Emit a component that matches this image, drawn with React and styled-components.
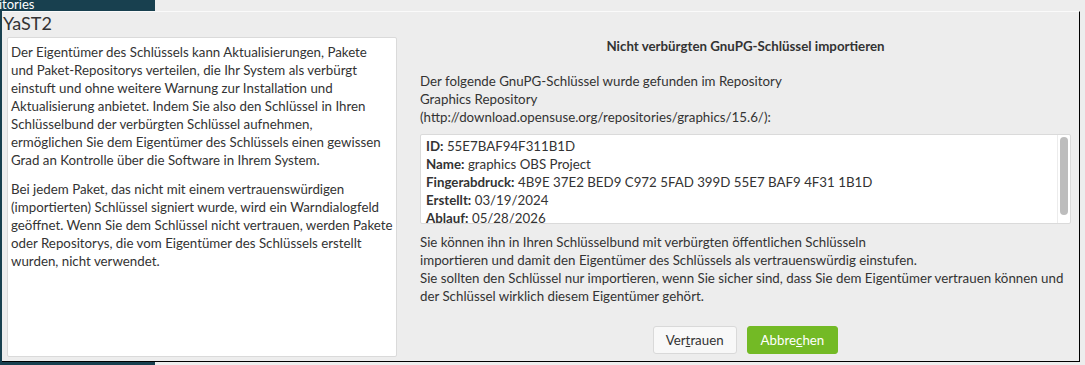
import React from "react";
import styled, { createGlobalStyle } from "styled-components";

const Global = createGlobalStyle`
  html, body { margin: 0; padding: 0; background: #ededed; }
  body { font-family: Lato, "Noto Sans", sans-serif; }
  * { box-sizing: border-box; }
`;

const Desktop = styled.div`
  position: relative;
  width: 1085px;
  height: 365px;
  background: #ededed;
  overflow: hidden;
`;

const BackWindow = styled.div`
  position: absolute;
  left: 0;
  top: 0;
  width: 155px;
  height: 365px;
  background: #18404f;
`;

const BackLabel = styled.div`
  color: #ffffff;
  font-size: 13px;
  line-height: 10px;
  margin-left: -1px;
  margin-top: -1px;
  white-space: nowrap;
`;

const Window = styled.div`
  position: absolute;
  left: 2px;
  top: 11px;
  width: 1078px;
  height: 351px;
  background: #ededed;
  border-top: 1px solid #fafafa;
  border-right: 1px solid #000;
  border-bottom: 1px solid #000;
  display: flex;
  flex-direction: column;
  color: #333;
`;

const TitleBar = styled.div`
  height: 25px;
  padding-left: 1px;
  font-size: 18px;
  line-height: 22px;
  color: #333;
`;

const Body = styled.div`
  flex: 1;
  display: flex;
  padding: 0 4px 4px 5px;
  min-height: 0;
`;

const LeftPanel = styled.div`
  width: 390px;
  background: #fff;
  border: 1px solid #dadada;
  border-radius: 2px;
  padding: 5px 3px;
  font-size: 13.3px;
  line-height: 18px;
`;

const Para = styled.p`
  margin: 0 0 ${(p) => p.$gap || 0}px 0;
  white-space: nowrap;
`;

const RightPanel = styled.div`
  flex: 1;
  display: flex;
  flex-direction: column;
  padding: 0 4px 0 23px;
  font-size: 13.3px;
  line-height: 18px;
`;

const Heading = styled.div`
  font-weight: 700;
  text-align: center;
`;

const Text = styled.div`
  margin-top: ${(p) => p.$top}px;
  white-space: nowrap;
`;

const KeyBox = styled.div`
  margin-top: 8px;
  height: 90px;
  background: #fff;
  border: 1px solid #dadada;
  border-radius: 2px;
  display: flex;
  overflow: hidden;
`;

const KeyContent = styled.div`
  flex: 1;
  padding: 2px 5px;
  overflow: hidden;
  white-space: nowrap;
`;

const Track = styled.div`
  width: 13px;
  border-left: 1px solid #ececec;
  padding: 2px 2px 8px 2px;
  display: flex;
`;

const Thumb = styled.div`
  flex: 1;
  background: #bdbdbd;
  border-radius: 4px;
`;

const Label = styled.b`
  font-weight: 700;
`;

const Buttons = styled.div`
  margin-top: 21px;
  display: flex;
  justify-content: center;
  gap: 10px;
`;

const Button = styled.button`
  height: 28px;
  padding: 0 ${(p) => (p.$primary ? 13 : 12)}px;
  font-family: inherit;
  font-size: 13.3px;
  border-radius: 3px;
  border: 1px solid ${(p) => (p.$primary ? "#73ba25" : "#d9d9d9")};
  background: ${(p) => (p.$primary ? "#73ba25" : "#f8f8f8")};
  color: ${(p) => (p.$primary ? "#fff" : "#333")};
`;

const U = styled.span`
  text-decoration: underline;
`;

export default function App() {
  return (
    <>
      <Global />
      <Desktop>
        <BackWindow>
          <BackLabel>itories</BackLabel>
        </BackWindow>
        <Window>
          <TitleBar>YaST2</TitleBar>
          <Body>
            <LeftPanel>
              <Para $gap={11}>
                Der Eigentümer des Schlüssels kann Aktualisierungen, Pakete
                <br />
                und Paket-Repositorys verteilen, die Ihr System als verbürgt
                <br />
                einstuft und ohne weitere Warnung zur Installation und
                <br />
                Aktualisierung anbietet. Indem Sie also den Schlüssel in Ihren
                <br />
                Schlüsselbund der verbürgten Schlüssel aufnehmen,
                <br />
                ermöglichen Sie dem Eigentümer des Schlüssels einen gewissen
                <br />
                Grad an Kontrolle über die Software in Ihrem System.
              </Para>
              <Para>
                Bei jedem Paket, das nicht mit einem vertrauenswürdigen
                <br />
                (importierten) Schlüssel signiert wurde, wird ein Warndialogfeld
                <br />
                geöffnet. Wenn Sie dem Schlüssel nicht vertrauen, werden Pakete
                <br />
                oder Repositorys, die vom Eigentümer des Schlüssels erstellt
                <br />
                wurden, nicht verwendet.
              </Para>
            </LeftPanel>
            <RightPanel>
              <Heading>Nicht verbürgten GnuPG-Schlüssel importieren</Heading>
              <Text $top={17}>
                Der folgende GnuPG-Schlüssel wurde gefunden im Repository
                <br />
                Graphics Repository
                <br />
                (http://download.opensuse.org/repositories/graphics/15.6/):
              </Text>
              <KeyBox>
                <KeyContent>
                  <div>
                    <Label>ID:</Label> 55E7BAF94F311B1D
                  </div>
                  <div>
                    <Label>Name:</Label> graphics OBS Project
                  </div>
                  <div>
                    <Label>Fingerabdruck:</Label> 4B9E 37E2 BED9 C972 5FAD 399D 55E7 BAF9 4F31 1B1D
                  </div>
                  <div>
                    <Label>Erstellt:</Label> 03/19/2024
                  </div>
                  <div>
                    <Label>Ablauf:</Label> 05/28/2026
                  </div>
                </KeyContent>
                <Track>
                  <Thumb />
                </Track>
              </KeyBox>
              <Text $top={9}>
                Sie können ihn in Ihren Schlüsselbund mit verbürgten öffentlichen Schlüsseln
                <br />
                importieren und damit den Eigentümer des Schlüssels als vertrauenswürdig einstufen.
                <br />
                Sie sollten den Schlüssel nur importieren, wenn Sie sicher sind, dass Sie dem Eigentümer vertrauen können und
                <br />
                der Schlüssel wirklich diesem Eigentümer gehört.
              </Text>
              <Buttons>
                <Button>
                  Ver<U>t</U>rauen
                </Button>
                <Button $primary>
                  Abbre<U>c</U>hen
                </Button>
              </Buttons>
            </RightPanel>
          </Body>
        </Window>
      </Desktop>
    </>
  );
}
